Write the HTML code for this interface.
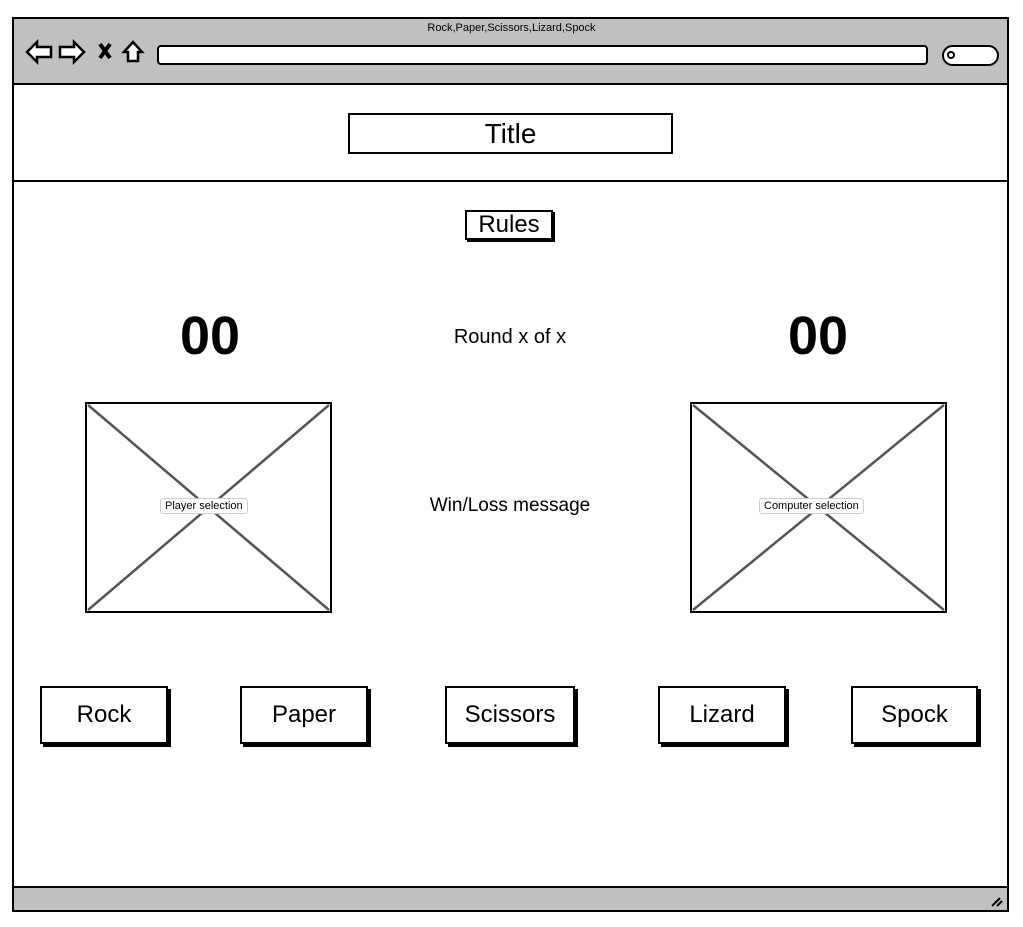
<!DOCTYPE html>
<html><head><style>
body{margin:0;width:1023px;height:927px;background:#fff;font-family:"Liberation Sans",sans-serif;position:relative;overflow:hidden;color:#000}
.a{position:absolute;box-sizing:border-box}
.btn{position:absolute;box-sizing:border-box;border:2px solid #000;background:#fff;box-shadow:3px 3px 0 #000;font-size:24px;display:flex;align-items:center;justify-content:center}
.lbl{position:absolute;font-size:11px;background:#fff;border:1px solid #ccc;border-radius:3px;padding:1px 4px}
</style></head><body>
<div class="a" style="left:12px;top:17px;width:997px;height:895px;border:2px solid #000;border-radius:3px"></div>
<div class="a" style="left:12px;top:17px;width:997px;height:68px;background:#c0c0c0;border:2px solid #000"></div>
<div class="a" style="left:0;top:22px;width:1023px;text-align:center;font-size:11px">Rock,Paper,Scissors,Lizard,Spock</div>
<svg class="a" style="left:24px;top:38px" width="130" height="28" viewBox="0 0 130 28">
<path d="M3 14 L13 4 L13 9 L27 9 L27 19 L13 19 L13 24 Z" fill="#fff" stroke="#000" stroke-width="2.5"/>
<path d="M60 14 L50 4 L50 9 L36 9 L36 19 L50 19 L50 24 Z" fill="#fff" stroke="#000" stroke-width="2.5"/>
<path d="M76 6 L86 20 M86 6 L76 20" stroke="#000" stroke-width="4"/>
<path d="M100 14 L109 4 L118 14 L114 14 L114 23 L104 23 L104 14 Z" fill="#fff" stroke="#000" stroke-width="2.5"/>
</svg>
<div class="a" style="left:157px;top:45px;width:771px;height:20px;background:#fff;border:2px solid #000;border-radius:4px"></div>
<div class="a" style="left:942px;top:45px;width:57px;height:21px;background:#fff;border:2px solid #000;border-radius:11px"></div>
<div class="a" style="left:947px;top:51px;width:8px;height:8px;border:2px solid #000;border-radius:50%"></div>
<div class="a" style="left:12px;top:180px;width:997px;height:2px;background:#000"></div>
<div class="a" style="left:348px;top:113px;width:325px;height:41px;border:2px solid #000;font-size:28px;text-align:center;line-height:37px">Title</div>
<div class="btn" style="left:465px;top:210px;width:88px;height:30px;font-size:24px;box-shadow:2px 2px 0 #000">Rules</div>
<div class="a" style="left:140px;top:305px;width:140px;text-align:center;font-size:54px;font-weight:bold">00</div>
<div class="a" style="left:748px;top:305px;width:140px;text-align:center;font-size:54px;font-weight:bold">00</div>
<div class="a" style="left:380px;top:326px;width:260px;text-align:center;font-size:20px">Round x of x</div>
<div class="a" style="left:380px;top:495px;width:260px;text-align:center;font-size:19px">Win/Loss message</div>
<svg class="a" style="left:85px;top:402px" width="247" height="211"><rect x="1" y="1" width="245" height="209" fill="#fff" stroke="#000" stroke-width="2"/><path d="M3 3 L244 208 M244 3 L3 208" stroke="#555" stroke-width="2.5"/></svg>
<svg class="a" style="left:690px;top:402px" width="257" height="211"><rect x="1" y="1" width="255" height="209" fill="#fff" stroke="#000" stroke-width="2"/><path d="M3 3 L254 208 M254 3 L3 208" stroke="#555" stroke-width="2.5"/></svg>
<div class="lbl" style="left:160px;top:498px">Player selection</div>
<div class="lbl" style="left:759px;top:498px">Computer selection</div>
<div class="btn" style="left:40px;top:686px;width:128px;height:58px">Rock</div>
<div class="btn" style="left:240px;top:686px;width:128px;height:58px">Paper</div>
<div class="btn" style="left:445px;top:686px;width:130px;height:58px">Scissors</div>
<div class="btn" style="left:658px;top:686px;width:128px;height:58px">Lizard</div>
<div class="btn" style="left:851px;top:686px;width:127px;height:58px">Spock</div>
<div class="a" style="left:12px;top:886px;width:997px;height:26px;background:#c0c0c0;border:2px solid #000"></div>
<svg class="a" style="left:990px;top:894px" width="14" height="14"><path d="M2 12 L10 4 M7 12 L12 7" stroke="#000" stroke-width="2"/></svg>
</body></html>
